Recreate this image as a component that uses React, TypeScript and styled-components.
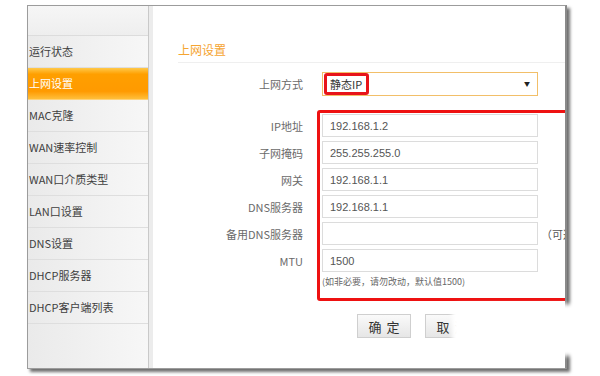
import styled, { createGlobalStyle } from "styled-components";

const GlobalStyle = createGlobalStyle`
  body {
    margin: 0;
    background: #fff;
    font-family: "Noto Sans CJK SC", "Liberation Sans", sans-serif;
  }
`;

const Page = styled.div`
  position: relative;
  width: 600px;
  height: 376px;
  padding: 5px 0 0 27px;
  box-sizing: border-box;
  overflow: hidden;
`;

const Frame = styled.div`
  display: flex;
  width: 540px;
  height: 364px;
  box-sizing: border-box;
  border: 1px solid #9c9c9c;
  border-right: 2px solid #8a8a8a;
  box-shadow: 3px 3px 3px #6f6f6f;
  overflow: hidden;
`;

const Sidebar = styled.div`
  width: 120px;
  flex-shrink: 0;
  background: linear-gradient(to right, #eaeaea, #f7f7f7);
  display: flex;
  flex-direction: column;
`;

const SideHead = styled.div`
  height: 29px;
  border-bottom: 1px solid #dcdcdc;
  background: linear-gradient(to bottom, #f6f6f6, #eeeeee);
`;

const MenuItem = styled.div<{ $active?: boolean }>`
  height: 31px;
  line-height: 31px;
  padding-left: 1px;
  font-size: 11px;
  white-space: nowrap;
  color: ${(p) => (p.$active ? "#fff" : "#3f3f3f")};
  border-bottom: 1px solid ${(p) => (p.$active ? "#ffd27a" : "#dedede")};
  background: ${(p) =>
    p.$active
      ? "linear-gradient(to bottom, #ffc94a 0%, #ff9f00 20%, #ff9a00 75%, #ffbf3a 100%)"
      : "transparent"};
`;

const Divider = styled.div`
  width: 4px;
  flex-shrink: 0;
  border-left: 1px solid #c9c9c9;
  background: #ececec;
`;

const Content = styled.div`
  flex: 1;
  position: relative;
  background: #fff;
  padding: 34px 0 0 25px;
`;

const Title = styled.div`
  font-size: 12px;
  color: #f5a431;
  line-height: 20px;
  padding-bottom: 2px;
  border-bottom: 1px solid #efefef;
`;

const Form = styled.div`
  display: flex;
  flex-direction: column;
  margin-top: 7px;
`;

const Row = styled.div<{ $gap?: number }>`
  display: flex;
  align-items: center;
  height: 27px;
  margin-top: ${(p) => p.$gap ?? 0}px;
`;

const Label = styled.div`
  width: 125px;
  margin-right: 19px;
  text-align: right;
  font-size: 11px;
  color: #6a6a6a;
  white-space: nowrap;
`;

const Select = styled.div`
  width: 216px;
  height: 24px;
  box-sizing: border-box;
  border: 1px solid #f2bf69;
  display: flex;
  align-items: center;
  justify-content: space-between;
  padding: 0 7px 0 1px;
  font-size: 11px;
  color: #333;
`;

const Highlight = styled.span`
  border: 3px solid #e8141a;
  border-radius: 3px;
  padding: 1px 4px 1px 3px;
  line-height: 14px;
`;

const Arrow = styled.span`
  font-size: 6px;
  color: #222;
`;

const Input = styled.input`
  width: 216px;
  height: 23px;
  box-sizing: border-box;
  border: 1px solid #dcdcdc;
  padding: 0 7px;
  font-family: "Liberation Sans", Arial, sans-serif;
  font-size: 11px;
  color: #555;
  background: #fff;
  outline: none;
`;

const Optional = styled.span`
  margin-left: 3px;
  font-size: 11px;
  color: #555;
  white-space: nowrap;
`;

const Hint = styled.div`
  margin: 1px 0 0 144px;
  font-size: 9px;
  color: #666;
  white-space: nowrap;
`;

const RedBox = styled.div`
  position: absolute;
  left: 164px;
  top: 104px;
  width: 280px;
  height: 191px;
  border: 3px solid #ee1111;
  border-radius: 3px;
  box-sizing: border-box;
`;

const Buttons = styled.div`
  display: flex;
  gap: 14px;
  margin: 26px 0 0 179px;
`;

const Button = styled.div`
  width: 54px;
  height: 24px;
  box-sizing: border-box;
  border: 1px solid #cfcfcf;
  background: linear-gradient(to bottom, #fafafa, #e6e6e6);
  font-size: 13px;
  color: #333;
  letter-spacing: 5px;
  display: flex;
  align-items: center;
  justify-content: center;
  padding-left: 5px;
`;

const Smudge = styled.div`
  position: absolute;
  left: 452px;
  top: 304px;
  width: 130px;
  height: 52px;
  background: #fff;
  filter: blur(2px);
  border-radius: 8px;
`;

const menu = [
  "运行状态",
  "上网设置",
  "MAC克隆",
  "WAN速率控制",
  "WAN口介质类型",
  "LAN口设置",
  "DNS设置",
  "DHCP服务器",
  "DHCP客户端列表",
];

const fields = [
  { label: "IP地址", value: "192.168.1.2" },
  { label: "子网掩码", value: "255.255.255.0" },
  { label: "网关", value: "192.168.1.1" },
  { label: "DNS服务器", value: "192.168.1.1" },
  { label: "备用DNS服务器", value: "", optional: true },
  { label: "MTU", value: "1500" },
];

export default function App() {
  return (
    <>
      <GlobalStyle />
      <Page>
        <Frame>
          <Sidebar>
            <SideHead />
            {menu.map((m) => (
              <MenuItem key={m} $active={m === "上网设置"}>
                {m}
              </MenuItem>
            ))}
          </Sidebar>
          <Divider />
          <Content>
            <Title>上网设置</Title>
            <Form>
              <Row>
                <Label>上网方式</Label>
                <Select>
                  <Highlight>静态IP</Highlight>
                  <Arrow>▼</Arrow>
                </Select>
              </Row>
              {fields.map((f, i) => (
                <Row key={f.label} $gap={i === 0 ? 15 : 0}>
                  <Label>{f.label}</Label>
                  <Input defaultValue={f.value} readOnly />
                  {f.optional && <Optional>（可选）</Optional>}
                </Row>
              ))}
              <Hint>(如非必要，请勿改动，默认值1500)</Hint>
            </Form>
            <RedBox />
            <Buttons>
              <Button>确定</Button>
              <Button>取消</Button>
            </Buttons>
          </Content>
        </Frame>
        <Smudge />
      </Page>
    </>
  );
}
